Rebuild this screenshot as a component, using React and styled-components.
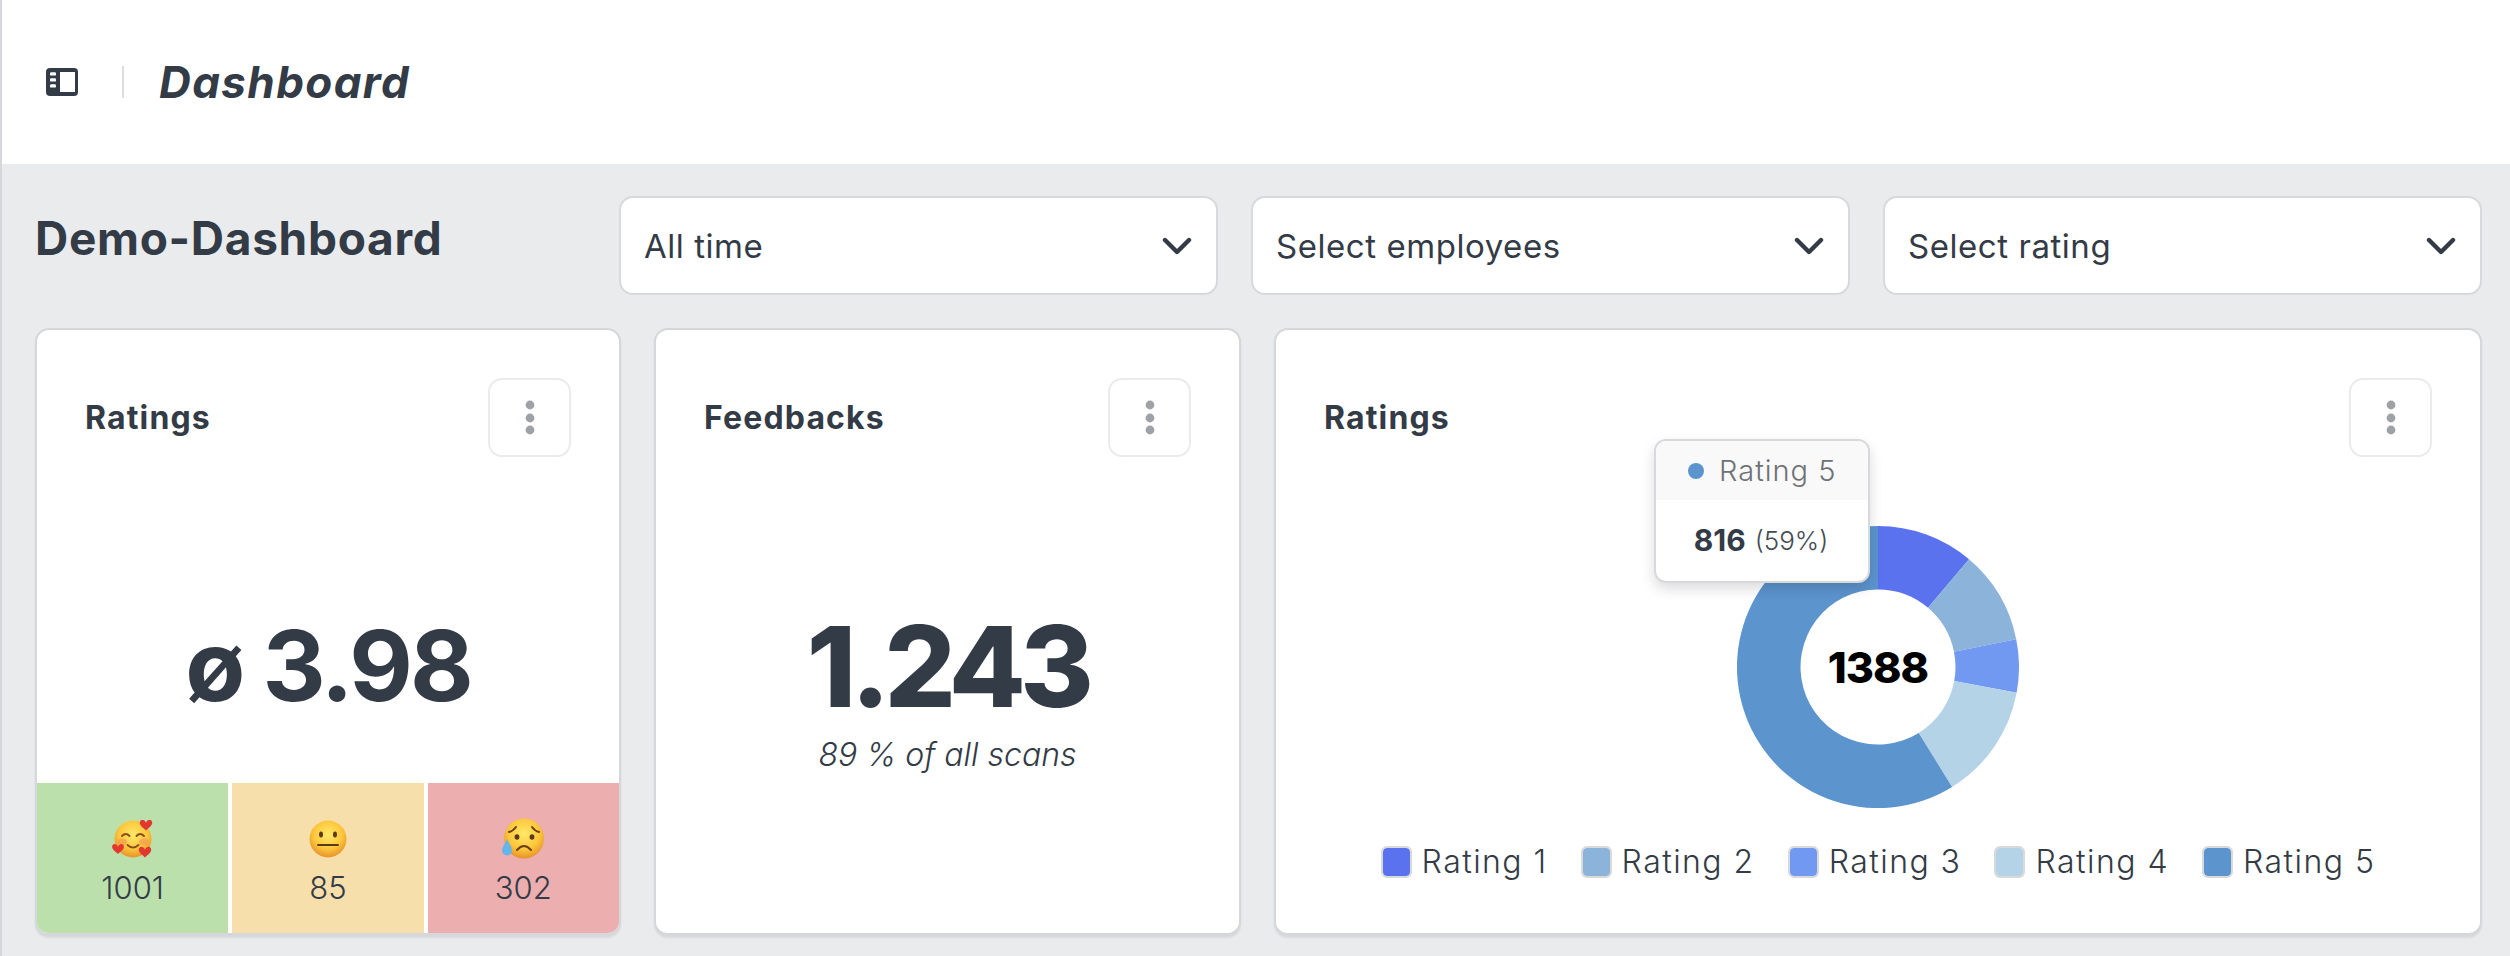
import React from "react";
import styled, { createGlobalStyle } from "styled-components";

const Global = createGlobalStyle`
  html, body { margin: 0; padding: 0; background: #eaebed; }
  body { font-family: Inter, "Open Sans", "Liberation Sans", sans-serif; color: #333b46; }
  * { box-sizing: border-box; }
`;

const Page = styled.div`
  min-height: 956px;
  background: #eaebed;
  border-left: 2px solid #d6d7da;
`;
const TopBar = styled.header`
  height: 164px;
  background: #fff;
  display: flex;
  align-items: center;
  padding: 0 0 0 44px;
`;
const Divider = styled.span`
  width: 2px;
  height: 32px;
  background: #dddddf;
  margin: 0 35px 0 44px;
`;
const PageTitle = styled.h1`
  margin: 0;
  font-size: 44px;
  line-height: 48px;
  font-weight: 700;
  font-style: italic;
  letter-spacing: 1.4px;
`;
const Main = styled.main`
  padding: 32px 28px 0 33px;
`;
const Toolbar = styled.div`
  display: grid;
  grid-template-columns: 551px repeat(3, 599px);
  column-gap: 33px;
  align-items: start;
`;
const BoardTitle = styled.h2`
  margin: 16px 0 0 0;
  font-size: 46px;
  line-height: 52px;
  font-weight: 700;
  letter-spacing: 0.7px;
  white-space: nowrap;
`;
const Select = styled.div`
  height: 99px;
  background: #fff;
  border: 2px solid #d8d9dc;
  border-radius: 14px;
  display: flex;
  align-items: center;
  justify-content: space-between;
  padding: 0 24px 0 23px;
  font-size: 33px;
  font-weight: 400;
  letter-spacing: 0.55px;
`;
const Cards = styled.div`
  display: grid;
  grid-template-columns: 586px 587px 1208px;
  column-gap: 33px;
  margin-top: 33px;
`;
const Card = styled.section`
  height: 608px;
  background: #fff;
  border: 2px solid #d6d7da;
  border-bottom-width: 3px;
  border-radius: 14px;
  box-shadow: 0 2px 2px rgba(0, 0, 0, 0.08);
  overflow: hidden;
  display: flex;
  flex-direction: column;
  position: relative;
`;
const CardHead = styled.div`
  display: flex;
  align-items: center;
  justify-content: space-between;
  padding: 48px 48px 0 48px;
`;
const CardTitle = styled.h3`
  margin: 0;
  font-size: 32px;
  font-weight: 700;
  line-height: 40px;
  letter-spacing: 1.15px;
`;
const Kebab = styled.button`
  width: 83px;
  height: 79px;
  padding: 0;
  background: #fff;
  border: 2px solid #ebebec;
  border-radius: 14px;
  display: flex;
  align-items: center;
  justify-content: center;
`;
const CardBody = styled.div`
  flex: 1;
  display: flex;
  flex-direction: column;
  align-items: center;
  justify-content: center;
`;
const Average = styled.div`
  font-size: 98px;
  line-height: 110px;
  font-weight: 700;
  letter-spacing: -3px;
  margin-top: 92px;
`;
const BigNumber = styled.div`
  font-size: 112px;
  line-height: 100px;
  font-weight: 800;
  letter-spacing: -5.6px;
`;
const SubText = styled.div`
  font-size: 32px;
  line-height: 38px;
  font-style: italic;
  font-weight: 300;
  margin-top: 20px;
`;
const Tiles = styled.div`
  display: grid;
  grid-template-columns: repeat(3, 1fr);
  column-gap: 4px;
  height: 150px;
  flex: none;
`;
const Tile = styled.div`
  background: ${(p) => p.$bg};
  display: flex;
  flex-direction: column;
  align-items: center;
  padding-top: 33px;
`;
const EmojiSlot = styled.span`
  height: 46px;
  display: flex;
  align-items: center;
  justify-content: center;
`;
const TileCount = styled.span`
  font-size: 31px;
  line-height: 36px;
  font-weight: 300;
  margin-top: 8px;
`;
const ChartBox = styled.div`
  width: 282px;
  height: 282px;
  margin-top: 69px;
  position: relative;
  flex: none;
`;
const Total = styled.span`
  position: absolute;
  inset: 0;
  display: flex;
  align-items: center;
  justify-content: center;
  font-size: 43px;
  font-weight: 800;
  color: #000;
  letter-spacing: -1px;
`;
const ChartSlot = styled.div`
  flex: 1;
  display: flex;
  flex-direction: column;
  align-items: center;
`;
const Tooltip = styled.div`
  position: absolute;
  left: 378px;
  top: 109px;
  width: 216px;
  height: 144px;
  background: #fff;
  border: 2px solid #d8d9dc;
  border-radius: 12px;
  box-shadow: 0 6px 14px rgba(0, 0, 0, 0.14);
  overflow: hidden;
  z-index: 2;
`;
const TipHead = styled.div`
  height: 59px;
  background: #f9f9f9;
  display: flex;
  align-items: center;
  padding-left: 32px;
  gap: 15px;
  font-size: 29px;
  font-weight: 300;
  letter-spacing: 1px;
  color: #6e7175;
`;
const TipDot = styled.span`
  width: 16px;
  height: 16px;
  border-radius: 50%;
  background: #5c94ce;
`;
const TipBody = styled.div`
  height: 80px;
  display: flex;
  align-items: center;
  justify-content: center;
  gap: 9px;
  font-size: 30px;
  font-weight: 700;
  padding-right: 2px;
`;
const TipPct = styled.span`
  font-size: 26px;
  font-weight: 300;
  color: #444b55;
`;
const Legend = styled.ul`
  list-style: none;
  margin: 35px 0 0;
  padding: 0;
  display: flex;
  gap: 33px;
`;
const LegendItem = styled.li`
  display: flex;
  align-items: center;
  gap: 10px;
  font-size: 32px;
  line-height: 38px;
  font-weight: 300;
  letter-spacing: 1.45px;
`;
const Swatch = styled.span`
  width: 31px;
  height: 32px;
  border-radius: 6px;
  border: 2px solid #d8d9da;
  background: ${(p) => p.$color};
  background-clip: padding-box;
`;

const SideIcon = () => (
  <svg width="32" height="28" viewBox="0 0 32 28">
    <rect width="32" height="28" rx="4" fill="#333b46" />
    <rect x="14" y="4" width="15" height="20" fill="#fff" />
    <rect x="4" y="4.2" width="6" height="3.4" rx="1.2" fill="#fff" />
    <rect x="4" y="10.2" width="6" height="3.4" rx="1.2" fill="#fff" />
    <rect x="4" y="16.2" width="6" height="3.4" rx="1.2" fill="#fff" />
  </svg>
);
const Chevron = () => (
  <svg width="30" height="18" viewBox="0 0 30 18">
    <path d="M3 3 L15 15 L27 3" fill="none" stroke="#333b46" strokeWidth="4.4" strokeLinecap="round" strokeLinejoin="round" />
  </svg>
);
const Dots = () => (
  <svg width="10" height="36" viewBox="0 0 10 36">
    <circle cx="5" cy="5" r="4.4" fill="#9ea1a6" />
    <circle cx="5" cy="18" r="4.4" fill="#9ea1a6" />
    <circle cx="5" cy="30" r="4.4" fill="#9ea1a6" />
  </svg>
);
const FaceDefs = ({ id }) => (
  <defs>
    <radialGradient id={id} cx="50%" cy="38%" r="62%">
      <stop offset="0%" stopColor="#ffe868" />
      <stop offset="62%" stopColor="#fcc73c" />
      <stop offset="100%" stopColor="#e8922a" />
    </radialGradient>
  </defs>
);
const Heart = ({ x, y, s = 1 }) => (
  <path
    transform={`translate(${x} ${y}) scale(${s})`}
    d="M0 3 C-1.5 -1.5 -7 -1 -6.5 3.5 C-6.2 6.5 -2 9 0 11 C2 9 6.2 6.5 6.5 3.5 C7 -1 1.5 -1.5 0 3 Z"
    fill="#e2372f"
  />
);
const LoveFace = () => (
  <svg width="42" height="38" viewBox="0 0 42 38">
    <FaceDefs id="love" />
    <circle cx="21" cy="19" r="18.5" fill="url(#love)" />
    <ellipse cx="10" cy="22" rx="5" ry="3.5" fill="#f59a58" opacity=".7" />
    <ellipse cx="32" cy="22" rx="5" ry="3.5" fill="#f59a58" opacity=".7" />
    <path d="M10 16 Q14 12 17.5 16 M24.5 16 Q28 12 32 16 M15.5 25 Q21 30 26.5 25" fill="none" stroke="#8a4f1e" strokeWidth="1.9" strokeLinecap="round" />
    <Heart x={34} y={0} s={0.95} />
    <Heart x={6} y={24} s={0.9} />
    <Heart x={33} y={27} s={0.95} />
  </svg>
);
const NeutralFace = () => (
  <svg width="40" height="38" viewBox="0 0 40 38">
    <FaceDefs id="neutral" />
    <ellipse cx="20" cy="19" rx="18.5" ry="18.5" fill="url(#neutral)" />
    <ellipse cx="13" cy="14.5" rx="2" ry="3" fill="#5c3a18" />
    <ellipse cx="27" cy="14.5" rx="2" ry="3" fill="#5c3a18" />
    <path d="M10 25 H30" stroke="#5c3a18" strokeWidth="2" strokeLinecap="round" />
  </svg>
);
const SadFace = () => (
  <svg width="44" height="42" viewBox="0 0 44 42">
    <FaceDefs id="sad" />
    <circle cx="23" cy="20.5" r="20" fill="url(#sad)" />
    <ellipse cx="16" cy="19" rx="2.4" ry="2.8" fill="#5c3a18" />
    <ellipse cx="31" cy="19" rx="2.4" ry="2.8" fill="#5c3a18" />
    <path d="M8 14 Q12 13 15 9 M38 14 Q34 13 31 9 M16 32 Q23 24 30 32" fill="none" stroke="#6a4218" strokeWidth="2" strokeLinecap="round" />
    <path d="M6 21 C9 27 11 29 11 32.5 A5 5 0 0 1 1 32.5 C1 29 3.5 27 6 21 Z" fill="#66b5ea" />
  </svg>
);

const sectors = [
  { from: 0, to: 40.2, color: "#5b72ee" },
  { from: 40.2, to: 78.6, color: "#8cb3d9" },
  { from: 78.6, to: 100.5, color: "#7199f2" },
  { from: 100.5, to: 148.3, color: "#b5d3e7" },
  { from: 148.3, to: 360, color: "#5c94ce" },
];
const point = (r, deg) => {
  const a = (deg * Math.PI) / 180;
  return `${(141 + r * Math.sin(a)).toFixed(2)} ${(141 - r * Math.cos(a)).toFixed(2)}`;
};
const sectorPath = ({ from, to }) => {
  const large = to - from > 180 ? 1 : 0;
  return `M${point(141, from)} A141 141 0 ${large} 1 ${point(141, to)} L${point(77.5, to)} A77.5 77.5 0 ${large} 0 ${point(77.5, from)} Z`;
};
const Donut = () => (
  <svg width="282" height="282" viewBox="0 0 282 282">
    {sectors.map((s) => (
      <path key={s.from} d={sectorPath(s)} fill={s.color} />
    ))}
  </svg>
);

const legend = [
  ["Rating 1", "#5b72ee"],
  ["Rating 2", "#8cb3d9"],
  ["Rating 3", "#7199f2"],
  ["Rating 4", "#b5d3e7"],
  ["Rating 5", "#5c94ce"],
];

const CardHeader = ({ title }) => (
  <CardHead>
    <CardTitle>{title}</CardTitle>
    <Kebab aria-label="menu"><Dots /></Kebab>
  </CardHead>
);

export default function App() {
  return (
    <>
      <Global />
      <Page>
        <TopBar>
          <SideIcon />
          <Divider />
          <PageTitle>Dashboard</PageTitle>
        </TopBar>
        <Main>
          <Toolbar>
            <BoardTitle>Demo-Dashboard</BoardTitle>
            <Select>All time<Chevron /></Select>
            <Select>Select employees<Chevron /></Select>
            <Select>Select rating<Chevron /></Select>
          </Toolbar>
          <Cards>
            <Card>
              <CardHeader title="Ratings" />
              <CardBody>
                <Average>ø 3.98</Average>
              </CardBody>
              <Tiles>
                <Tile $bg="#bce0ac"><EmojiSlot><LoveFace /></EmojiSlot><TileCount>1001</TileCount></Tile>
                <Tile $bg="#f6dfab"><EmojiSlot><NeutralFace /></EmojiSlot><TileCount>85</TileCount></Tile>
                <Tile $bg="#ecaeae"><EmojiSlot><SadFace /></EmojiSlot><TileCount>302</TileCount></Tile>
              </Tiles>
            </Card>
            <Card>
              <CardHeader title="Feedbacks" />
              <CardBody>
                <BigNumber>1.243</BigNumber>
                <SubText>89 % of all scans</SubText>
              </CardBody>
            </Card>
            <Card>
              <CardHeader title="Ratings" />
              <ChartSlot>
                <ChartBox>
                  <Donut />
                  <Total>1388</Total>
                </ChartBox>
                <Legend>
                  {legend.map(([name, color]) => (
                    <LegendItem key={name}><Swatch $color={color} />{name}</LegendItem>
                  ))}
                </Legend>
              </ChartSlot>
              <Tooltip>
                <TipHead><TipDot />Rating 5</TipHead>
                <TipBody>816 <TipPct>(59%)</TipPct></TipBody>
              </Tooltip>
            </Card>
          </Cards>
        </Main>
      </Page>
    </>
  );
}
